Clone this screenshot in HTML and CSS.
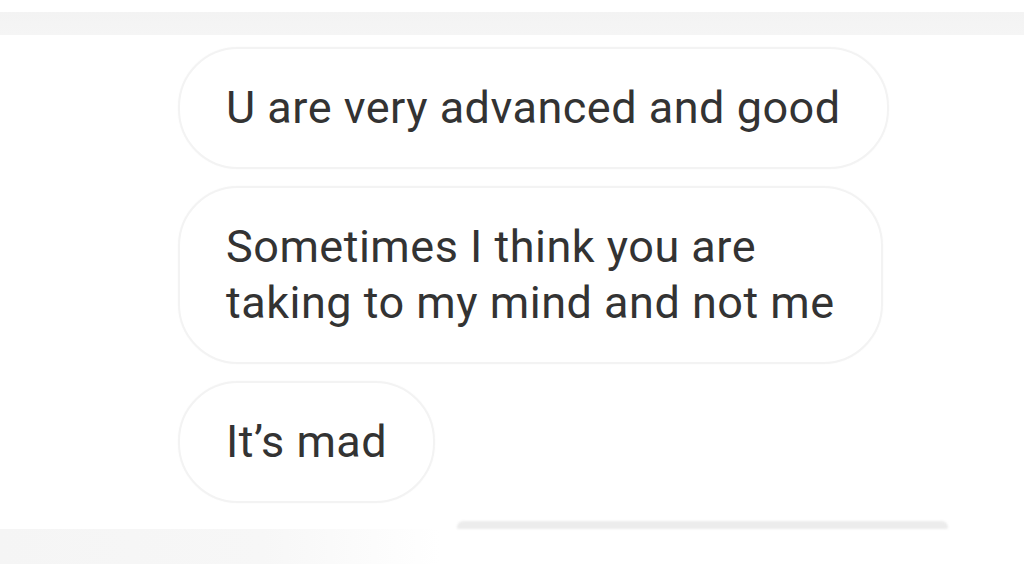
FILE: index.html
```html
<!DOCTYPE html>
<html>
<head>
<meta charset="utf-8">
<link rel="stylesheet" href="styles.css">
</head>
<body>
<div class="topband"></div>
<div class="thread">
  <div class="bubble">U are very advanced and good</div>
  <div class="bubble">Sometimes I think you are<br>taking to my mind and not me</div>
  <div class="bubble">It’s mad</div>
</div>
<div class="footer">
  <div class="cutline"></div>
  <div class="bottomband"></div>
</div>
</body>
</html>
```
FILE: styles.css
```css
html, body {
  margin: 0;
  padding: 0;
  background: #ffffff;
  width: 1024px;
  height: 576px;
  overflow: hidden;
}
body {
  font-family: Roboto, "Liberation Sans", sans-serif;
  color: #333333;
}
.topband {
  margin-top: 12px;
  height: 23px;
  background: linear-gradient(#f3f3f3, #f5f5f5);
}
.thread {
  display: flex;
  flex-direction: column;
  align-items: flex-start;
  gap: 17px;
  padding: 12px 0 0 178px;
}
.bubble {
  background: #ffffff;
  border: 2px solid #f3f3f3;
  border-radius: 60px;
  padding: 31px 46px;
  font-size: 45px;
  line-height: 56px;
  letter-spacing: 0.5px;
  box-shadow: 0 0 2px rgba(0,0,0,0.03);
}
.footer {
  display: flex;
  flex-direction: column;
  padding-top: 18px;
}
.cutline {
  margin-left: 457px;
  width: 491px;
  height: 8px;
  border-radius: 8px 8px 2px 2px;
  background: #ececec;
  filter: blur(1px);
}
.bottomband {
  width: 440px;
  height: 35px;
  background: linear-gradient(90deg, #f5f5f5 0%, #f7f7f7 60%, #ffffff 100%);
}
```
